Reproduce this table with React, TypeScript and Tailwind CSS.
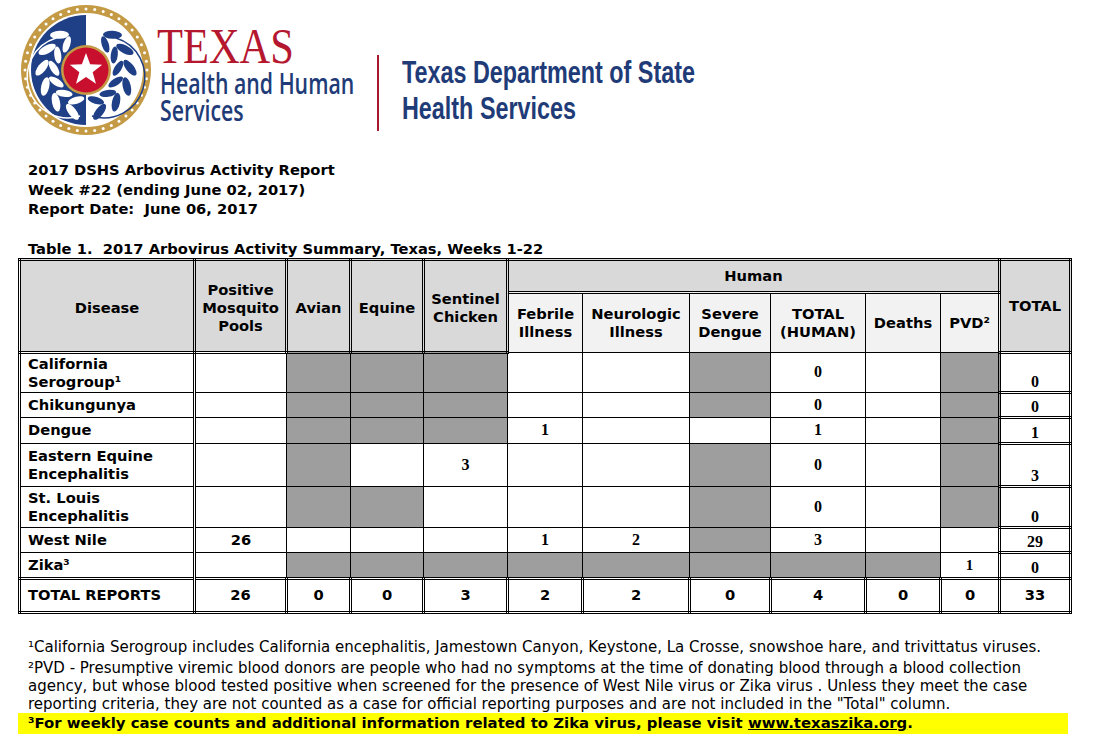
import React from 'react';

const HATCH =
  'bg-[repeating-conic-gradient(#5f5f5f_0%_25%,#dcdcdc_0%_50%)] bg-[length:2px_2px]';

type Cell = { v?: string; h?: boolean; sans?: boolean; light?: boolean };

interface Row {
  name: React.ReactNode;
  height: string;
  cells: Cell[];
  total: string;
}

const H: Cell = { h: true };
const E: Cell = {};

const rows: Row[] = [
  {
    name: (
      <>
        California
        <br />
        Serogroup¹
      </>
    ),
    height: 'h-[40px]',
    cells: [E, H, H, H, E, E, H, { v: '0' }, E, H],
    total: '0',
  },
  { name: 'Chikungunya', height: 'h-[25px]', cells: [E, H, H, H, E, E, H, { v: '0' }, E, H], total: '0' },
  { name: 'Dengue', height: 'h-[26px]', cells: [E, H, H, H, { v: '1' }, E, E, { v: '1' }, E, H], total: '1' },
  {
    name: (
      <>
        Eastern Equine
        <br />
        Encephalitis
      </>
    ),
    height: 'h-[43px]',
    cells: [E, H, E, { v: '3' }, E, E, H, { v: '0' }, E, H],
    total: '3',
  },
  {
    name: (
      <>
        St. Louis
        <br />
        Encephalitis
      </>
    ),
    height: 'h-[41px]',
    cells: [E, H, H, E, E, E, H, { v: '0' }, E, H],
    total: '0',
  },
  {
    name: 'West Nile',
    height: 'h-[25px]',
    cells: [{ v: '26', sans: true }, E, E, E, { v: '1' }, { v: '2' }, H, { v: '3' }, E, E],
    total: '29',
  },
  { name: 'Zika³', height: 'h-[26px]', cells: [E, H, H, H, H, H, H, H, H, { v: '1', light: true }], total: '0' },
];

const totals = ['26', '0', '0', '3', '2', '2', '0', '4', '0', '0'];

function Seal() {
  const dots = Array.from({ length: 44 }, (_, i) => {
    const a = (i / 44) * Math.PI * 2;
    return <circle key={i} cx={66 + 61 * Math.cos(a)} cy={66 + 61 * Math.sin(a)} r={1.5} fill="#fff" />;
  });
  const leaves = [];
  for (let i = 0; i < 6; i++) {
    const deg = 108 + i * 25;
    const t = (deg * Math.PI) / 180;
    const ox = 66 + 44 * Math.cos(t);
    const oy = 66 + 44 * Math.sin(t);
    const ix = 66 + 32 * Math.cos(t);
    const iy = 66 + 32 * Math.sin(t);
    leaves.push(
      <ellipse key={`o${i}`} cx={ox} cy={oy} rx={9.5} ry={4} transform={`rotate(${deg + 90 + 35} ${ox} ${oy})`} />,
      <ellipse key={`i${i}`} cx={ix} cy={iy} rx={8.5} ry={3.5} transform={`rotate(${deg + 90 - 35} ${ix} ${iy})`} />,
    );
  }
  const star = Array.from({ length: 10 }, (_, i) => {
    const r = i % 2 === 0 ? 17 : 7;
    const a = -Math.PI / 2 + (i * Math.PI) / 5;
    return `${66 + r * Math.cos(a)},${66 + r * Math.sin(a)}`;
  }).join(' ');

  return (
    <svg width="132" height="132" viewBox="0 0 132 132">
      <circle cx="66" cy="66" r="65" fill="#c49a45" />
      {dots}
      <circle cx="66" cy="66" r="57" fill="#fff" />
      <path d="M66 11 A55 55 0 0 0 66 121 Z" fill="#1f3f87" />
      <path d="M60 112 A40 40 0 0 1 36 34" fill="none" stroke="#fff" strokeWidth="1.5" />
      <g fill="#fff">{leaves}</g>
      <g transform="translate(132 0) scale(-1 1)">
        <path d="M60 112 A40 40 0 0 1 36 34" fill="none" stroke="#1f3f87" strokeWidth="1.5" />
        <g fill="#1f3f87">{leaves}</g>
      </g>
      <circle cx="66" cy="66" r="25" fill="#c49a45" />
      <circle cx="66" cy="66" r="22.5" fill="#c8102e" />
      <polygon points={star} fill="#fff" />
    </svg>
  );
}

function BodyCell({ c }: { c: Cell }) {
  const font = c.sans
    ? "font-['DejaVu_Sans',sans-serif] text-[14.7px] font-bold"
    : c.light
      ? "font-['Liberation_Serif',serif] text-[15px]"
      : "font-['Liberation_Serif',serif] text-[16px] font-bold";
  return (
    <td className={`border border-black text-center align-middle ${font} ${c.h ? HATCH : ''}`}>{c.v}</td>
  );
}

export default function App() {
  const th = 'border-[3px] border-double border-black bg-[#d9d9d9] text-center align-middle';
  const sub = 'border border-black bg-[#f2f2f2] text-center align-middle';

  return (
    <div className="w-[1102px] h-[751px] bg-white overflow-hidden font-['DejaVu_Sans',sans-serif] text-black">
      {/* logos */}
      <div className="flex h-[150px]">
        <div className="ml-[20px] mt-[4px]">
          <Seal />
        </div>
        <div className="ml-[5px] mt-[24px] w-[220px] whitespace-nowrap">
          <div className="h-[44px] origin-left scale-x-[0.85] font-['Liberation_Serif',serif] text-[50px] leading-[44px] text-[#b5172f]">
            TEXAS
          </div>
          <div className="origin-left scale-x-[0.76] font-['Open_Sans',sans-serif] font-semibold text-[28px] leading-[27px] text-[#1f3c78] mt-[2px] ml-[3px]">
            Health and Human
            <br />
            Services
          </div>
        </div>
        <div className="mt-[55px] h-[76px] w-[2px] bg-[#a6192e]" />
        <div className="ml-[23px] mt-[54px] whitespace-nowrap origin-left scale-x-[0.73] font-['Liberation_Sans',sans-serif] font-bold text-[32px] leading-[36px] text-[#1f3c78]">
          Texas Department of State
          <br />
          Health Services
        </div>
      </div>

      {/* report heading */}
      <div className="ml-[28px] mt-[10px] text-[14.7px] font-bold leading-[19.5px]">
        <div>2017 DSHS Arbovirus Activity Report</div>
        <div>Week #22 (ending June 02, 2017)</div>
        <div>Report Date:&nbsp; June 06, 2017</div>
      </div>
      <div className="ml-[28px] mt-[21px] text-[14.7px] font-bold leading-[18px]">
        Table 1.&nbsp; 2017 Arbovirus Activity Summary, Texas, Weeks 1-22
      </div>

      <table className="ml-[18px] w-[1051px] table-fixed border-collapse border-[3px] border-double border-black text-[14.7px] font-bold leading-[18px]">
        <colgroup>
          <col className="w-[175px]" />
          <col className="w-[92px]" />
          <col className="w-[64px]" />
          <col className="w-[73px]" />
          <col className="w-[84px]" />
          <col className="w-[75px]" />
          <col className="w-[107px]" />
          <col className="w-[81px]" />
          <col className="w-[95px]" />
          <col className="w-[75px]" />
          <col className="w-[59px]" />
          <col className="w-[71px]" />
        </colgroup>
        <thead>
          <tr className="h-[33px]">
            <th rowSpan={2} className={`${th} pt-[4px]`}>Disease</th>
            <th rowSpan={2} className={`${th} pt-[4px]`}>
              Positive
              <br />
              Mosquito
              <br />
              Pools
            </th>
            <th rowSpan={2} className={`${th} pt-[4px]`}>Avian</th>
            <th rowSpan={2} className={`${th} pt-[4px]`}>Equine</th>
            <th rowSpan={2} className={`${th} pt-[4px]`}>
              Sentinel
              <br />
              Chicken
            </th>
            <th colSpan={6} className={th}>Human</th>
            <th rowSpan={2} className={th}>TOTAL</th>
          </tr>
          <tr className="h-[60px]">
            <th className={sub}>
              Febrile
              <br />
              Illness
            </th>
            <th className={sub}>
              Neurologic
              <br />
              Illness
            </th>
            <th className={sub}>
              Severe
              <br />
              Dengue
            </th>
            <th className={sub}>
              TOTAL
              <br />
              (HUMAN)
            </th>
            <th className={sub}>Deaths</th>
            <th className={sub}>PVD²</th>
          </tr>
        </thead>
        <tbody>
          {rows.map((r, i) => (
            <tr key={i} className={r.height}>
              <td className="border border-r-[3px] border-double border-black pl-[7px] text-left align-middle">
                {r.name}
              </td>
              {r.cells.map((c, j) => (
                <BodyCell key={j} c={c} />
              ))}
              <td className="border-[3px] border-double border-black text-center align-bottom font-['Liberation_Serif',serif] text-[16px] font-bold leading-[19px]">
                {r.total}
              </td>
            </tr>
          ))}
          <tr className="h-[34px]">
            <td className="border-[3px] border-double border-black pl-[7px] text-left align-middle">TOTAL REPORTS</td>
            {totals.map((t, j) => (
              <td key={j} className="border-[3px] border-double border-black text-center align-middle">
                {t}
              </td>
            ))}
            <td className="border-[3px] border-double border-black text-center align-middle">33</td>
          </tr>
        </tbody>
      </table>

      {/* footnotes */}
      <div className="mt-[24px] text-[15px] leading-[18px] whitespace-nowrap">
        <div className="pl-[28px]">
          ¹California Serogroup includes California encephalitis, Jamestown Canyon, Keystone, La Crosse, snowshoe
          hare, and trivittatus viruses.
        </div>
        <div className="pl-[28px] mt-[3px]">
          ²PVD - Presumptive viremic blood donors are people who had no symptoms at the time of donating blood through
          a blood collection
          <br />
          agency, but whose blood tested positive when screened for the presence of West Nile virus or Zika virus .
          Unless they meet the case
          <br />
          reporting criteria, they are not counted as a case for official reporting purposes and are not included in
          the "Total" column.
        </div>
        <div className="ml-[18px] w-[1050px] pl-[10px] bg-[#ffff00] text-[14.9px] font-bold leading-[21px]">
          ³For weekly case counts and additional information related to Zika virus, please visit{' '}
          <span className="underline">www.texaszika.org</span>.
        </div>
      </div>
    </div>
  );
}
